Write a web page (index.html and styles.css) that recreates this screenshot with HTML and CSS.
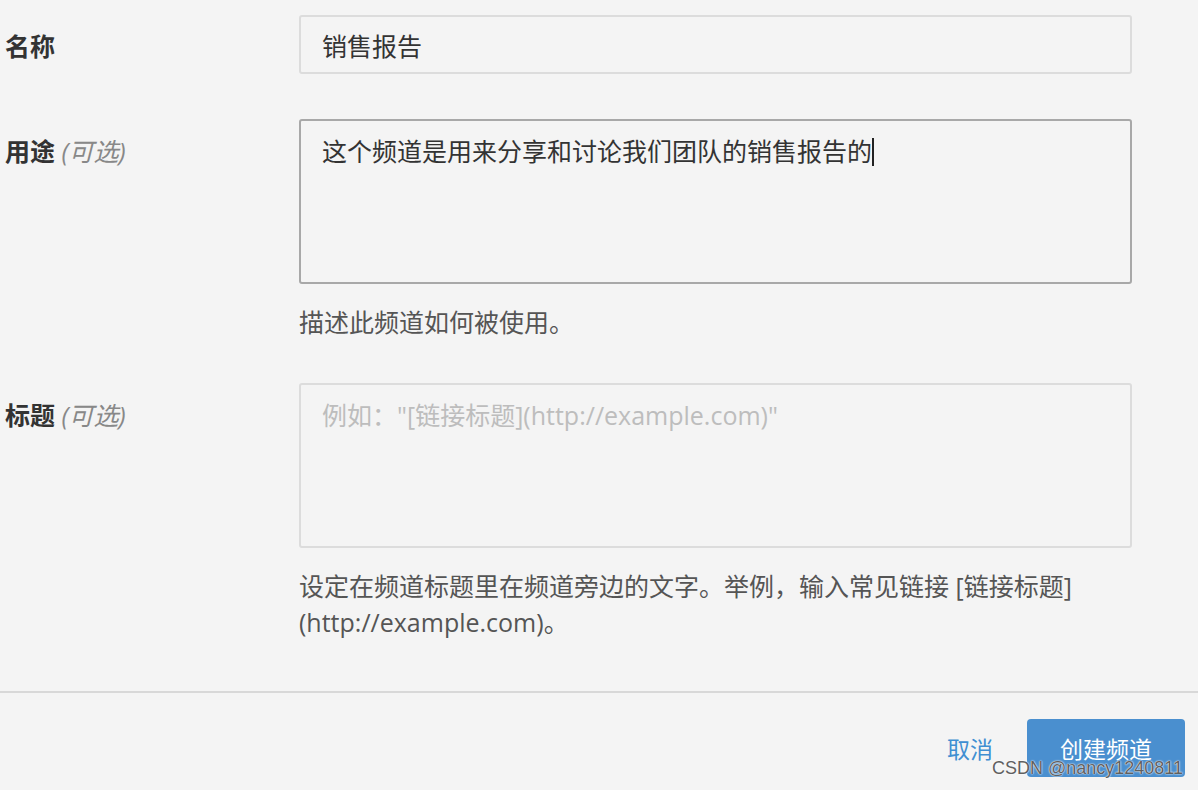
FILE: index.html
```html
<!DOCTYPE html>
<html>
<head>
  <meta charset="utf-8">
  <link rel="stylesheet" href="styles.css">
</head>
<body>
  <div class="form">
    <div class="row row-name">
      <div class="label">名称</div>
      <div class="field">
        <div class="input">销售报告</div>
      </div>
    </div>

    <div class="row row-purpose">
      <div class="label">用途 <span class="optional">(可选)</span></div>
      <div class="field">
        <div class="textarea focused">这个频道是用来分享和讨论我们团队的销售报告的<span class="caret"></span></div>
        <div class="help">描述此频道如何被使用。</div>
      </div>
    </div>

    <div class="row row-topic">
      <div class="label">标题 <span class="optional">(可选)</span></div>
      <div class="field">
        <div class="textarea placeholder">例如："[链接标题](http://example.com)"</div>
        <div class="help">设定在频道标题里在频道旁边的文字。举例，输入常见链接 [链接标题](http://example.com)。</div>
      </div>
    </div>
  </div>

  <div class="footer">
    <button class="btn-cancel">取消</button>
    <button class="btn-create">创建频道</button>
  </div>

  <div class="watermark">CSDN @nancy1240811</div>
</body>
</html>
```

FILE: styles.css
```css
html, body {
  margin: 0;
  padding: 0;
  height: 790px;
  overflow: hidden;
}

body {
  position: relative;
  background: #f4f4f4;
  font-family: "Open Sans", "Noto Sans CJK SC", sans-serif;
  font-size: 25px;
  color: #333;
}

.form {
  padding: 15px 66px 0 5px;
}

.row {
  display: grid;
  grid-template-columns: 294px 833px;
}

.row-name {
  margin-bottom: 45px;
}

.row-purpose {
  margin-bottom: 43px;
}

.label {
  font-weight: bold;
  color: #333;
  line-height: 36px;
  padding-top: 14px;
}

.row-name .label {
  padding-top: 13px;
}

.optional {
  font-weight: normal;
  font-style: italic;
  color: #888;
}

.input,
.textarea {
  box-sizing: border-box;
  border: 2px solid #dcdcdc;
  border-radius: 3px;
  padding: 11px 21px;
  line-height: 36px;
  color: #333;
}

.input {
  height: 59px;
}

.textarea {
  height: 165px;
  padding-top: 12px;
}

.textarea.focused {
  border-color: #a8a8a8;
}

.textarea.placeholder {
  color: #bdbdbd;
}

.caret {
  display: inline-block;
  width: 2px;
  height: 28px;
  background: #222;
  vertical-align: -5px;
}

.help {
  margin-top: 20px;
  line-height: 36px;
  color: #555;
}

.row-topic .help {
  margin-top: 20px;
}

.footer {
  margin-top: 51px;
  border-top: 2px solid #d8d8d8;
  padding: 26px 13px 0 0;
  display: flex;
  justify-content: flex-end;
  align-items: center;
  gap: 34px;
}

.footer button {
  font-family: inherit;
  font-size: 23px;
  border: none;
  cursor: pointer;
}

.btn-cancel {
  background: none;
  color: #3f8fd2;
  padding: 0;
}

.btn-create {
  background: #4a8fcf;
  color: #fff;
  border-radius: 4px;
  width: 158px;
  height: 58px;
}

.watermark {
  position: absolute;
  right: 15px;
  bottom: 11px;
  font-family: "Liberation Sans", sans-serif;
  font-size: 18px;
  color: #606060;
  text-shadow: 0 0 2px #fff, 0 0 1px #fff;
}
```
